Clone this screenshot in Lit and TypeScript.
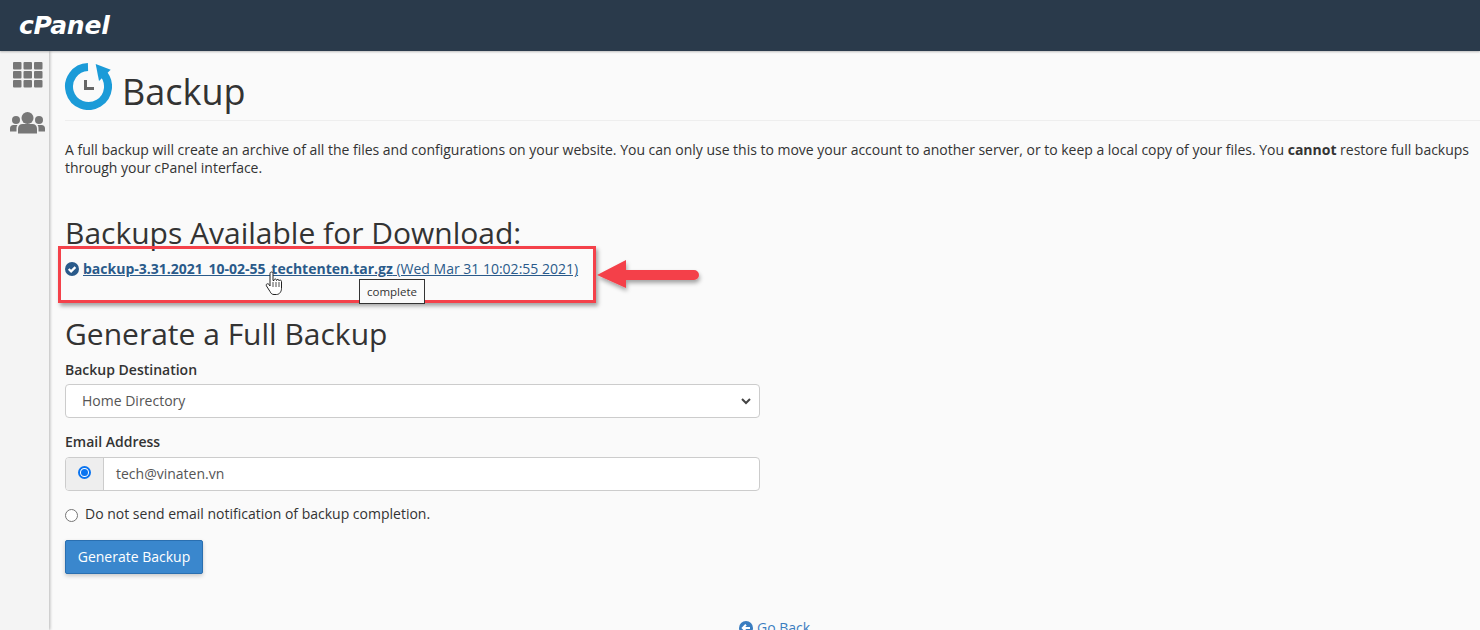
import { LitElement, html, css } from "lit";
import { customElement } from "lit/decorators.js";

@customElement("app-root")
export class AppRoot extends LitElement {
  static styles = css`
    :host { display: block; width: 1480px; height: 630px; overflow: hidden; position: relative; background: #fafafa; font-family: "Open Sans", sans-serif; font-size: 14px; color: #333; line-height: 18px; }
    * { box-sizing: border-box; }
    .top { height: 51px; background: #2a3a4b; display: flex; align-items: center; padding-left: 19px; box-shadow: 0 1px 2px rgba(0,0,0,.25); position: relative; z-index: 2; }
    .logo { color: #fff; font: italic 700 25px/1 "DejaVu Sans", sans-serif; letter-spacing: -.2px; margin-top: -1px; }
    .body { display: flex; height: 579px; }
    .side { width: 49px; background: #f4f4f4; box-shadow: 1px 0 3px rgba(0,0,0,.28); display: flex; flex-direction: column; align-items: flex-start; flex: none; }
    .side svg { display: block; }
    .grid { margin: 11px 0 0 13px; }
    .users { margin: 24px 0 0 10px; }
    .main { flex: 1; padding: 10px 0 0 16px; min-width: 0; }
    .title { display: flex; align-items: flex-start; gap: 9px; height: 60px; border-bottom: 1px solid #eee; }
    .title svg { margin-top: 1px; margin-left: -1px; flex: none; }
    h1 { font-size: 36px; font-weight: 400; margin: 6px 0 0 1px; line-height: 50px; color: #333; }
    .intro { margin: 20px 0 0; width: 1410px; font-size: 14px; line-height: 18px; letter-spacing: -.011px; }
    h2 { font-size: 30px; font-weight: 400; line-height: 36px; margin: 0; color: #333; }
    .avail { margin-top: 38px; }
    .row { margin-top: 9px; height: 18px; color: #2a5a8a; display: flex; align-items: center; white-space: pre; }
    .row svg { margin-right: 4px; }
    .row a { color: #2a5a8a; text-decoration: underline; }
    .row b { font-weight: 700; }
    .gen { margin-top: 38px; }
    label { display: block; font-weight: 600; font-size: 14px; line-height: 18px; }
    .l1 { margin-top: 9px; }
    .select { margin-top: 5px; width: 695px; height: 34px; background: #fff; border: 1px solid #ccc; border-radius: 4px; display: flex; align-items: center; justify-content: space-between; padding: 0 8px 0 16px; color: #555; }
    .l2 { margin-top: 15px; }
    .group { margin-top: 6px; width: 695px; height: 34px; display: flex; background: #fff; border: 1px solid #ccc; border-radius: 4px; color: #555; }
    .addon { width: 38px; background: #eee; border-right: 1px solid #ccc; display: flex; align-items: center; justify-content: center; border-radius: 3px 0 0 3px; padding-bottom: 4px; }
    .dot { width: 13px; height: 13px; border-radius: 50%; border: 2px solid #0a74f0; background: #fff; display: flex; align-items: center; justify-content: center; }
    .dot i { width: 7px; height: 7px; border-radius: 50%; background: #0a74f0; display: block; }
    .field { padding-left: 12px; display: flex; align-items: center; }
    .opt { margin-top: 14px; display: flex; align-items: center; gap: 7px; }
    .ring { width: 13px; height: 13px; border-radius: 50%; border: 1px solid #767676; background: #fff; margin-top: 3px; }
    .btn { margin-top: 17px; width: 138px; height: 34px; background: #3a87cd; border: 1px solid #2a6fb0; border-radius: 2px; color: #fff; display: flex; align-items: center; justify-content: center; box-shadow: 0 2px 4px rgba(0,0,0,.2); }
    .back { margin-top: 45px; margin-left: 674px; display: flex; align-items: center; gap: 4px; color: #3a7dc0; white-space: nowrap; }
    .mark { position: absolute; left: 58px; top: 246px; width: 538px; height: 57px; border: 3px solid #f4414a; box-shadow: 2px 3px 4px rgba(0,0,0,.35); }
    .arrow { position: absolute; left: 596px; top: 256px; }
    .tip { position: absolute; left: 359px; top: 279px; width: 66px; height: 25px; background: #fafafa; border: 1px solid #333; font-size: 11.5px; color: #333; display: flex; align-items: center; justify-content: center; }
    .hand { position: absolute; left: 265px; top: 271px; }
  `;

  render() {
    return html`
      <div class="top"><span class="logo">cPanel</span></div>
      <div class="body">
        <nav class="side">
          <svg class="grid" width="30" height="26" viewBox="0 0 30 26" fill="#777">
            <rect x="0" y="0" width="8.500" height="7.500" rx="1"/><rect x="10.500" y="0" width="8.500" height="7.500" rx="1"/><rect x="21" y="0" width="8.500" height="7.500" rx="1"/>
            <rect x="0" y="9" width="8.500" height="7.500" rx="1"/><rect x="10.500" y="9" width="8.500" height="7.500" rx="1"/><rect x="21" y="9" width="8.500" height="7.500" rx="1"/>
            <rect x="0" y="18" width="8.500" height="7.500" rx="1"/><rect x="10.500" y="18" width="8.500" height="7.500" rx="1"/><rect x="21" y="18" width="8.500" height="7.500" rx="1"/>
          </svg>
          <svg class="users" width="35" height="22" viewBox="0 0 35 22" fill="#777">
            <circle cx="17.500" cy="6" r="6"/><path d="M8 21.500v-5c0-2.500 2-4.500 4.500-4.500h10c2.500 0 4.500 2 4.500 4.500v5z"/>
            <circle cx="6" cy="8" r="4"/><path d="M0 19.500v-3c0-2 1.300-3.500 3.500-3.500h4c-.8 1-1 2-1 3.500v3z"/>
            <circle cx="29" cy="8" r="4"/><path d="M35 19.500v-3c0-2-1.300-3.500-3.500-3.500h-4c.8 1 1 2 1 3.500v3z"/>
          </svg>
        </nav>
        <main class="main">
          <div class="title">
            <svg width="48" height="48" viewBox="0 0 48 48">
              <path d="M24 5A19.500 19.500 0 1 0 38 10.400" fill="none" stroke="#1b9bd8" stroke-width="8"/>
              <path d="M31.700 2L46.700 7.700 35 19z" fill="#1b9bd8"/>
              <path d="M21.500 18V26.500H30" fill="none" stroke="#666" stroke-width="3"/>
            </svg>
            <h1>Backup</h1>
          </div>
          <p class="intro">A full backup will create an archive of all the files and configurations on your website. You can only use this to move your account to another server, or to keep a local copy of your files. You <b>cannot</b> restore full backups through your cPanel interface.</p>
          <h2 class="avail">Backups Available for Download:</h2>
          <div class="row">
            <svg width="14" height="14" viewBox="0 0 14 14"><circle cx="7" cy="7" r="7" fill="#2a5a8a"/><path d="M3.700 7l2.400 2.400 4.300-4.300" fill="none" stroke="#fff" stroke-width="2.200"/></svg>
            <a><b>backup-3.31.2021_10-02-55_techtenten.tar.gz</b> (Wed Mar 31 10:02:55 2021)</a>
          </div>
          <h2 class="gen">Generate a Full Backup</h2>
          <label class="l1">Backup Destination</label>
          <div class="select">
            <span>Home Directory</span>
            <svg width="10" height="8" viewBox="0 0 10 8"><path d="M1 2l4 4 4-4" fill="none" stroke="#444" stroke-width="2"/></svg>
          </div>
          <label class="l2">Email Address</label>
          <div class="group">
            <div class="addon"><span class="dot"><i></i></span></div>
            <div class="field">tech@vinaten.vn</div>
          </div>
          <div class="opt"><span class="ring"></span><span>Do not send email notification of backup completion.</span></div>
          <div class="btn">Generate Backup</div>
          <div class="back">
            <svg width="14" height="14" viewBox="0 0 14 14"><circle cx="7" cy="7" r="7" fill="#3a7dc0"/><path d="M11 7H5M7 3.800L3.800 7 7 10.200" fill="none" stroke="#fff" stroke-width="2"/></svg>
            <span>Go Back</span>
          </div>
        </main>
      </div>
      <div class="mark"></div>
      <svg class="arrow" width="110" height="42" viewBox="0 0 110 42">
        <defs><filter id="s" x="-20%" y="-30%" width="140%" height="170%"><feDropShadow dx="1" dy="3" stdDeviation="2" flood-color="#000" flood-opacity=".35"/></filter></defs>
        <path d="M1 19L30 4v10h68a5 5 0 0 1 0 10H30v8z" fill="#f4414a" filter="url(#s)"/>
      </svg>
      <div class="tip">complete</div>
      <svg class="hand" width="20" height="27" viewBox="0 0 20 27">
        <path d="M5 2.500c0-2 3-2 3 0v7l1 0c0-2 2.500-2 2.500 0 .3-1.500 2.500-1.500 2.500 .3.500-1 2.500-1 2.500 .7v7c0 3-2 6-5 6H9c-2 0-3-1-4-3l-3.500-5.500c-1-2 1.200-3 2.500-1.500L5 15z" fill="#fff" stroke="#222" stroke-width="1"/>
        <path d="M8 11v5M11 11v5M14 11v5" stroke="#222" stroke-width=".8"/>
      </svg>
    `;
  }
}
